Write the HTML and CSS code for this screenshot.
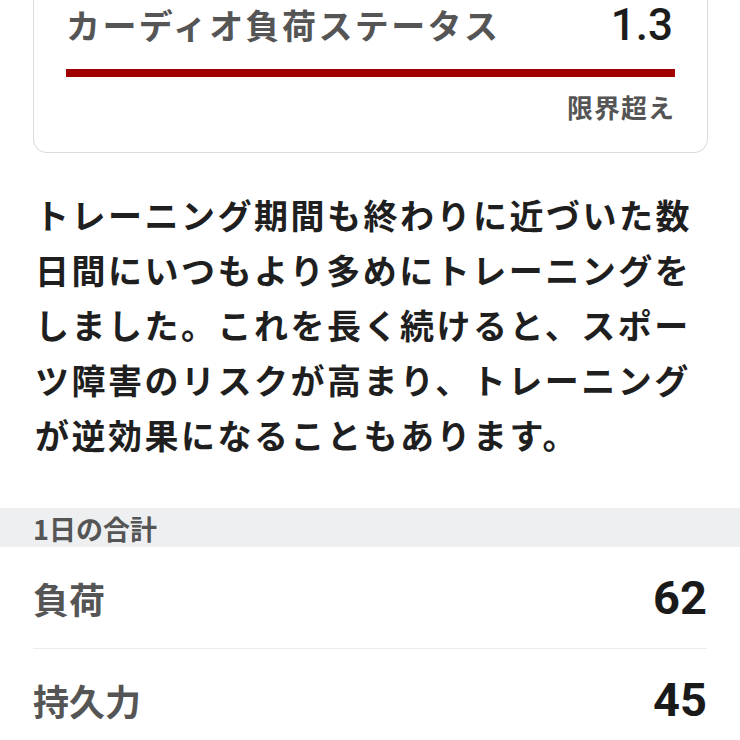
FILE: index.html
```html
<!DOCTYPE html>
<html lang="ja">
<head>
<meta charset="utf-8">
<link rel="stylesheet" href="styles.css">
</head>
<body>
<div class="card">
  <div class="card-head">
    <span class="card-title">カーディオ負荷ステータス</span>
    <span class="card-value">1.3</span>
  </div>
  <div class="bar"></div>
  <div class="status">限界超え</div>
</div>
<p class="desc">トレーニング期間も終わりに近づいた数日間にいつもより多めにトレーニングをしました。これを長く続けると、スポーツ障害のリスクが高まり、トレーニングが逆効果になることもあります。</p>
<div class="section-head">1日の合計</div>
<div class="rows">
  <div class="row"><span class="row-label">負荷</span><span class="row-value">62</span></div>
  <div class="row"><span class="row-label">持久力</span><span class="row-value">45</span></div>
</div>
</body>
</html>
```

FILE: styles.css
```css
html, body {
  margin: 0;
  padding: 0;
  background: #ffffff;
}
body {
  font-family: "Noto Sans CJK JP", "Noto Sans", sans-serif;
  overflow: hidden;
  height: 740px;
}
.card {
  margin: 0 32px 0 33px;
  border: 1px solid #dcdcdc;
  border-top: none;
  border-radius: 0 0 14px 14px;
  padding: 0 32px 27px 32px;
}
.card-head {
  display: flex;
  justify-content: space-between;
  align-items: center;
  height: 50px;
}
.card-title {
  font-size: 34px;
  font-weight: 700;
  color: #555555;
  letter-spacing: 2.4px;
  line-height: 50px;
}
.card-value {
  font-family: Roboto, "Liberation Sans", sans-serif;
  font-size: 44px;
  font-weight: 500;
  color: #1c1c1c;
  line-height: 50px;
  margin-right: 2px;
}
.bar {
  margin-top: 19px;
  height: 8px;
  background: #9e0000;
}
.status {
  margin-top: 12px;
  text-align: right;
  font-size: 26px;
  font-weight: 700;
  color: #555555;
  line-height: 36px;
  letter-spacing: 1px;
}
.desc {
  margin: 34px 35px 0 35px;
  font-size: 34px;
  font-weight: 700;
  color: #1f1f1f;
  letter-spacing: 2.5px;
  line-height: 55px;
}
.section-head {
  margin-top: 46px;
  background: #eeeff1;
  height: 39px;
  padding: 3px 33px 0 33px;
  box-sizing: border-box;
  font-size: 27px;
  font-weight: 700;
  color: #555555;
  line-height: 36px;
}
.rows {
  padding: 0 33px 0 33px;
}
.row {
  display: flex;
  justify-content: space-between;
  align-items: center;
  height: 101px;
  border-bottom: 1px solid #ececec;
}
.row-label {
  font-size: 36px;
  font-weight: 700;
  color: #555555;
}
.row-value {
  font-family: Roboto, "Liberation Sans", sans-serif;
  font-size: 47px;
  font-weight: 700;
  color: #1a1a1a;
}
```
